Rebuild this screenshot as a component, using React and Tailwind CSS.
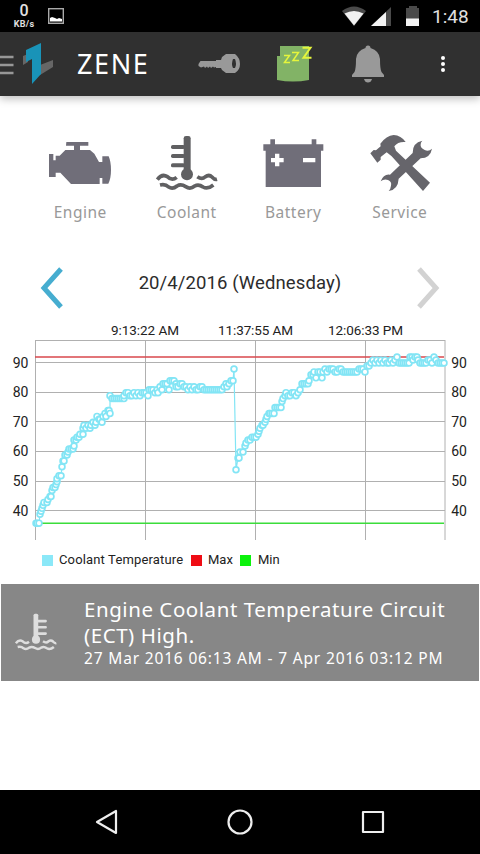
import React from 'react';

// temperature samples as [x, value]
const samples = [
  [36, 36], [37, 36], [39, 36], [40, 39], [41, 40], [42, 41], [43, 42], [44, 43], [47, 43], [48, 44],
  [50, 45], [51, 45], [52, 47], [53, 48], [55, 48], [56, 49], [57, 50], [57, 51], [59, 52], [61, 52],
  [62, 55], [63, 57], [64, 57], [65, 59], [67, 59], [68, 60], [69, 61], [71, 61], [73, 61], [74, 62],
  [74, 64], [76, 64], [77, 65], [79, 65], [80, 66], [83, 66], [83, 68], [84, 69], [86, 68], [88, 69],
  [90, 68], [91, 69], [93, 70], [95, 69], [96, 70], [97, 72], [99, 71], [100, 71], [102, 70], [103, 72],
  [105, 73], [106, 72], [108, 74], [109, 74], [110, 73], [110, 79], [112, 78], [114, 78], [116, 78], [118, 78],
  [120, 78], [122, 78], [124, 78], [124, 79], [126, 80], [128, 80], [130, 79], [132, 79], [134, 80], [136, 79],
  [138, 80], [140, 79], [142, 80], [144, 80], [146, 80], [148, 79], [149, 81], [151, 81], [153, 81], [155, 80],
  [157, 81], [158, 80], [160, 82], [162, 81], [163, 83], [165, 83], [167, 83], [169, 81], [170, 84], [172, 84],
  [174, 84], [176, 83], [176, 82], [178, 82], [180, 83], [182, 83], [184, 82], [186, 82], [188, 81], [190, 82],
  [192, 81], [194, 82], [196, 81], [198, 81], [200, 82], [202, 82], [204, 81], [206, 81], [208, 81], [210, 81],
  [212, 81], [214, 81], [216, 81], [218, 81], [220, 81], [222, 81], [224, 82], [226, 83], [227, 82], [229, 83],
  [231, 84], [233, 84], [234, 88], [236, 54], [238, 58], [239, 58], [240, 60], [243, 60], [245, 62], [246, 63],
  [248, 64], [250, 64], [252, 65], [254, 65], [256, 65], [258, 66], [259, 67], [260, 68], [262, 69], [263, 69],
  [265, 70], [266, 71], [267, 72], [269, 73], [270, 73], [272, 73], [274, 73], [275, 75], [277, 75], [279, 75],
  [281, 75], [282, 77], [283, 78], [285, 79], [286, 80], [288, 79], [290, 79], [292, 80], [294, 80], [296, 79],
  [298, 80], [300, 81], [302, 83], [304, 83], [306, 83], [308, 83], [309, 84], [311, 86], [313, 86], [314, 87],
  [316, 85], [318, 87], [320, 87], [322, 85], [323, 87], [325, 88], [327, 87], [329, 88], [331, 88], [333, 88],
  [335, 87], [337, 87], [339, 88], [341, 88], [343, 87], [345, 87], [347, 87], [349, 87], [351, 87], [353, 87],
  [355, 87], [357, 87], [359, 88], [361, 88], [363, 88], [365, 87], [367, 89], [369, 89], [371, 90], [373, 91],
  [375, 90], [377, 91], [379, 90], [381, 91], [383, 90], [385, 91], [387, 90], [389, 90], [391, 91], [393, 90],
  [395, 91], [397, 92], [399, 90], [401, 90], [403, 90], [405, 90], [407, 90], [409, 90], [410, 92], [412, 92],
  [413, 91], [415, 92], [417, 92], [418, 91], [420, 90], [422, 90], [424, 90], [426, 90], [428, 91], [430, 91],
  [432, 90], [434, 92], [436, 91], [438, 90], [440, 90], [442, 90], [444, 90],
];

const scaleY = (value) => 43 + (90 - value) * 2.966;

const Waves = ({ color }) => (
  <g fill="none" stroke={color} strokeWidth="11">
    <path d="M381 179 Q395 160 411 170 Q425 184 439 172" />
    <path d="M501 170 Q515 180 524 171 Q536 162 545 171 Q553 180 560 178" />
    <path d="M389 195 Q405 191 415 201 Q427 209 440 198 Q452 191 466 200 Q480 209 493 198 Q505 191 518 201 Q532 209 549 195" />
  </g>
);

const EngineIcon = () => (
  <svg className="h-14 w-16" viewBox="54 45 192 168" fill="#706e79">
    <path d="M109 66h66v11h-25v13h30l13 11 14 25h10v-17h19q7 16 7 41t-8 41h-18v-17h-8v18h-86l-32-34h-14v13H57v-69h13v19h7v-14h12l17-17h26V77h-24z" />
  </svg>
);

const CoolantIcon = ({ className, color, flipped }) => (
  <svg className={className} viewBox="374 45 192 168">
    <g fill={color} transform={flipped ? 'translate(940 0) scale(-1 1)' : undefined}>
      <rect x="460" y="48" width="21" height="112" rx="7" />
      <circle cx="470" cy="163" r="18" />
      <rect x="422" y="75" width="42" height="12" rx="5" />
      <rect x="422" y="102" width="42" height="12" rx="5" />
      <rect x="422" y="130" width="42" height="12" rx="5" />
    </g>
    <Waves color={color} />
  </svg>
);

const BatteryIcon = () => (
  <svg className="h-14 w-16" viewBox="63 45 192 168">
    <path fill="#706e79" d="M91 58h14v15h110V58h14v15h21v19h-7v109H77V92h-7V73h21z" />
    <path fill="#fff" d="M105 101h13v13h13v13h-13v12h-13v-12H93v-13h12zM189 114h37v13h-37z" />
  </svg>
);

const ServiceIcon = () => (
  <svg className="h-14 w-16" viewBox="382 45 192 168" fill="#66656b">
    <path d="M389 100l10-10 7 1 14-12-1-8q18-24 40-26 22 1 36 21-23-2-34 13l5 13 102 96-21 25-94-104-15-12-18 14v8l-10 9z" />
    <path d="M545 62q-30 6-29 37l-68 65q-19-3-28 20 10-8 22-4 12 5 9 17-1 10-7 16 28-4 30-37l66-61q29-1 34-29-10 10-22 4-14-6-12-17 0-6 5-11z" />
  </svg>
);

const categories = [
  { label: 'Engine', icon: <EngineIcon /> },
  { label: 'Coolant', icon: <CoolantIcon className="h-14 w-16" color="#606062" /> },
  { label: 'Battery', icon: <BatteryIcon /> },
  { label: 'Service', icon: <ServiceIcon /> },
];

const StatusBar = () => (
  <div className="flex h-8 bg-black pr-[11px] pl-3 text-[#e0e0e0]">
    <div className="flex w-6 flex-col items-center font-['Roboto'] font-medium">
      <span className="mt-[3px] block h-4 text-base leading-4">0</span>
      <span className="mt-px block text-[9px] leading-[9px] font-bold tracking-[0.3px]">KB/s</span>
    </div>
    <svg className="mt-2 ml-3 h-4 w-4" viewBox="0 0 16 16">
      <rect x="0.7" y="0.7" width="14.6" height="14.6" fill="none" stroke="#aaa" strokeWidth="1.4" />
      <path d="M2 13.500V10l2-1 3 1 2 1 2-1 3 1v2.500z" fill="#fff" />
    </svg>
    <svg className="ml-auto h-8 w-[86px]" viewBox="340 0 86 32">
      <path d="M342 11q12-9 24 0l-12 15z" fill="#4a4a4a" />
      <path d="M344.500 13.500q9.500-5 19 0L354 25.500z" fill="#f2f2f2" />
      <path d="M391 7v19h-20z" fill="#4a4a4a" />
      <path d="M386 12v14h-15z" fill="#f2f2f2" />
      <path d="M409 6h8v2h2v18h-13V8h3z" fill="#4a4a4a" />
      <path d="M406 18.500h13V26h-13z" fill="#f2f2f2" />
    </svg>
    <div className="ml-[6px] w-[37px] pt-[5px] font-['Roboto'] text-[19px] leading-6 whitespace-nowrap">1:48</div>
  </div>
);

const Header = () => (
  <div className="flex h-16 items-center bg-[#303030] shadow-[0_3px_8px_rgba(0,0,0,0.25)]">
    <svg className="h-16 w-14" viewBox="0 0 56 64">
      <path d="M0 25h13.500M0 33h13.500M0 41h13.500" stroke="#979797" strokeWidth="2.600" />
      <path d="M23 24l5-2v8l-5 3zM40 33l13-5v7l-13 8z" fill="#666" />
      <path d="M26 18l15-7v31L32 52V27l-6 3z" fill="#1993b8" />
    </svg>
    <h1 className="ml-[21px] w-[121px] font-['Noto_Sans'] text-[27px] tracking-[1.6px] text-white">ZENE</h1>
    <svg className="h-8 w-11" viewBox="0 0 44 32" fill="#999">
      <path fillRule="evenodd" d="M2.500 13H18v-1h5l1-3 4-3h9q5 4 5 10t-5 9h-9l-4-3-1-2h-5v-1l-2 .500-1-1-2 1.500-1-1.500-2 1.500-1-1.500-2 1.500-1-1.500-3 1-2.500-1.500v-2zM35 11q-2 5 0 9h2q2-4 0-9z" />
    </svg>
    <svg className="ml-8 h-10 w-10" viewBox="274 44 40 40">
      <path d="M280 46h29v34q-16 3-32 0V56h3z" fill="#82b366" />
      <g fill="none" stroke="#e5f53c" strokeWidth="1.500">
        <path d="M284 55.500h5.500l-5 7h5.500" />
        <path d="M292 52.500h6.500l-5.500 8h6" />
        <path d="M302.500 47.800h8l-7 10h8" strokeWidth="2" />
      </g>
    </svg>
    <svg className="ml-[38px] h-10 w-8" viewBox="352 44 32 40" fill="#999">
      <path d="M365.500 48q0-2.500 2.500-2.500t2.500 2.500q9 3 9.500 11 0 10 1.500 13l2.500 3v2h-32v-2l2.500-3q1.500-3 1.500-13 .5-8 9.500-11zM364 79h8q-1 3.500-4 3.500t-4-3.500z" />
    </svg>
    <svg className="ml-[55px] h-5 w-2" viewBox="0 0 8 20" fill="#fff">
      <circle cx="4" cy="4" r="2" />
      <circle cx="4" cy="10" r="2" />
      <circle cx="4" cy="16" r="2" />
    </svg>
  </div>
);

const CoolantChart = () => (
  <svg className="block h-[225px] w-[480px] font-['Roboto'] text-sm" viewBox="0 0 480 225">
    <g stroke="#b0b0b0" strokeWidth="1">
      {[40, 50, 60, 70, 80, 90].map((v) => (
        <line key={v} x1="35" x2="445" y1={Math.round(scaleY(v)) - 0.5} y2={Math.round(scaleY(v)) - 0.5} />
      ))}
      <line x1="35" x2="445" y1="20.5" y2="20.5" />
      {[35.5, 145.5, 255.5, 365.5, 445].map((x) => (
        <line key={x} x1={x} x2={x} y1="20" y2="220" />
      ))}
    </g>
    <g fill="#222" textAnchor="middle">
      <text x="145" y="15" textLength="68" fontSize="13.500">9:13:22 AM</text>
      <text x="255.500" y="15" textLength="75" fontSize="13.500">11:37:55 AM</text>
      <text x="365.500" y="15" textLength="75" fontSize="13.500">12:06:33 PM</text>
      {[40, 50, 60, 70, 80, 90].map((v) => (
        <React.Fragment key={v}>
          <text x="20.500" y={scaleY(v) + 4.5} fontSize="14" textLength="15.500">{v}</text>
          <text x="459" y={scaleY(v) + 4.5} fontSize="14" textLength="15.500">{v}</text>
        </React.Fragment>
      ))}
    </g>
    <line x1="35" x2="444" y1="37" y2="37" stroke="#d9474c" strokeWidth="1.5" />
    <line x1="35" x2="444" y1="203.2" y2="203.2" stroke="#3bdd3b" strokeWidth="1.5" />
    <g stroke="#83e5f5" fill="none">
      <polyline points={samples.map(([x, v]) => `${x},${scaleY(v)}`).join(' ')} strokeWidth="1.2" />
      {samples.map(([x, v], i) => (
        <circle key={i} cx={x} cy={scaleY(v)} r="2.9" fill="#fff" strokeWidth="1.7" />
      ))}
    </g>
  </svg>
);

const App = () => {
  return (
    <div className="flex h-[854px] w-[480px] flex-col overflow-hidden bg-white">
      <StatusBar />
      <Header />
      <div className="grid grid-cols-4 px-[27px] pt-[39px]">
        {categories.map(({ label, icon }) => (
          <div key={label} className="flex flex-col items-center">
            {icon}
            <span className="mt-[9px] font-['Noto_Sans'] text-[15.5px] leading-6 tracking-[0.5px] text-[#999]">{label}</span>
          </div>
        ))}
      </div>
      <div className="mt-10 flex h-12 items-center justify-between px-10">
        <svg className="h-12 w-6" viewBox="0 0 24 48">
          <path d="M21 5L4 24l17 19" fill="none" stroke="#46add0" strokeWidth="5" />
        </svg>
        <span className="pb-2 font-['Roboto'] text-[18.5px] tracking-[0.1px] text-[#2c2c2c]">20/4/2016 (Wednesday)</span>
        <svg className="h-12 w-6" viewBox="0 0 24 48">
          <path d="M3 5l17 19L3 43" fill="none" stroke="#d2d2d2" strokeWidth="5" />
        </svg>
      </div>
      <div className="mt-2">
        <CoolantChart />
      </div>
      <div className="mt-[5px] flex h-5 items-center pl-[42px] font-['Roboto'] text-[13px] text-[#222]">
        <span className="mr-[6px] h-[11px] w-[11px] bg-[#8be8f8]" />
        <span className="w-[126px] tracking-[0.15px] whitespace-nowrap">Coolant Temperature</span>
        <span className="mx-[6px] h-[11px] w-[11px] bg-[#ef0c14]" />
        <span className="w-[26px]">Max</span>
        <span className="mr-[7px] ml-[6px] h-[11px] w-[11px] bg-[#0cf20c]" />
        <span>Min</span>
      </div>
      <div className="mx-px mt-[14px] flex h-[97px] shrink-0 bg-[#878787] font-['Noto_Sans'] text-white">
        <CoolantIcon className="mt-[29px] ml-[13px] h-[38px] w-[44px]" color="#dedede" flipped />
        <div className="ml-[26px] pt-3 whitespace-nowrap">
          <p className="text-[20.5px] leading-[26px] tracking-[0.55px]">Engine Coolant Temperature Circuit</p>
          <p className="text-[20.5px] leading-[26px] tracking-[0.55px]">(ECT) High.</p>
          <p className="text-[15.5px] leading-5 tracking-[0.83px]">27 Mar 2016 06:13 AM - 7 Apr 2016 03:12 PM</p>
        </div>
      </div>
      <div className="mt-auto flex h-16 shrink-0 items-center justify-around bg-black px-10">
        <svg className="h-7 w-7" viewBox="0 0 28 28" fill="none" stroke="#eee" strokeWidth="2.200" strokeLinejoin="round">
          <path d="M23 3v22L4 14z" />
        </svg>
        <svg className="h-7 w-7" viewBox="0 0 28 28" fill="none" stroke="#eee" strokeWidth="2.200">
          <circle cx="14" cy="14" r="11.500" />
        </svg>
        <svg className="h-7 w-7" viewBox="0 0 28 28" fill="none" stroke="#eee" strokeWidth="2.200" strokeLinejoin="round">
          <path d="M4 4h20v20H4z" />
        </svg>
      </div>
    </div>
  );
};

export default App;
